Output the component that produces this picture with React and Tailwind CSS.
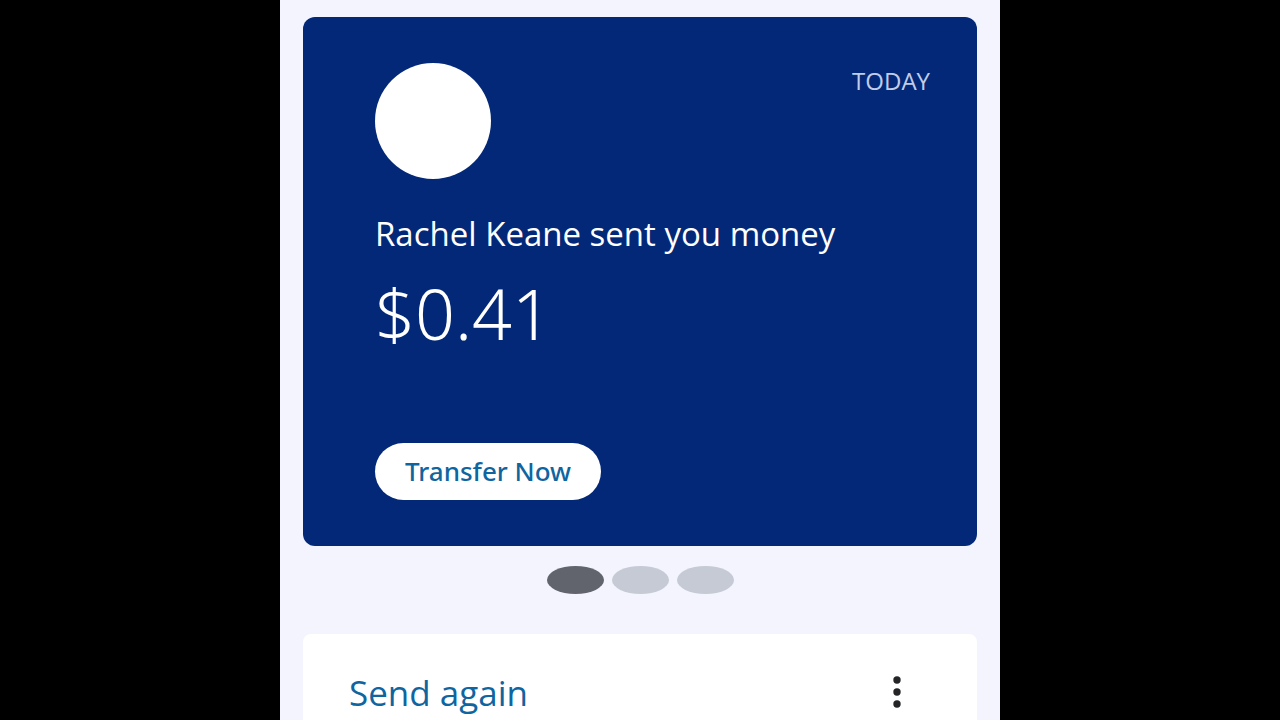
import React, { useState } from 'react'

const transfers = [
  { id: 1, label: 'Transfer received' },
  { id: 2, label: 'Second notice' },
  { id: 3, label: 'Third notice' },
]

function MoneyCard({ name, amount, day }) {
  return (
    <section className="rounded-xl bg-[#032878] pt-[46px] pr-[47px] pb-[46px] pl-[72px] text-white">
      <div className="flex items-start justify-between">
        <div className="h-[116px] w-[116px] rounded-full bg-white" />
        <time className="text-2xl leading-9 text-[#c0cdea]">{day}</time>
      </div>
      <h1 className="mt-8 text-[33px] leading-[46px]">{name} sent you money</h1>
      <p className="mt-4 font-['Noto_Sans'] text-[70px] leading-[80px] font-light">{amount}</p>
      <button className="mt-[90px] block h-[57px] rounded-full bg-white px-[30px] font-['Noto_Sans'] text-[26px] font-medium text-[#0f659f]">
        Transfer Now
      </button>
    </section>
  )
}

export default function App() {
  const [active, setActive] = useState(1)

  return (
    <div className="min-h-screen bg-black font-['Open_Sans',sans-serif]">
      <main className="mx-auto flex min-h-screen max-w-[720px] flex-col bg-[#f3f4fd] px-[23px] pt-[17px]">
        <MoneyCard name="Rachel Keane" amount="$0.41" day="TODAY" />

        <div className="flex justify-center gap-2 pt-5 pb-10">
          {transfers.map((t) => (
            <button
              key={t.id}
              aria-label={t.label}
              onClick={() => setActive(t.id)}
              className={`h-[28px] w-[57px] rounded-[50%] ${
                active === t.id ? 'bg-[#61646d]' : 'bg-[#c6cad4]'
              }`}
            />
          ))}
        </div>

        <section className="flex-1 rounded-t-lg bg-white pt-9 pr-[72px] pl-[46px]">
          <div className="flex items-start justify-between">
            <h2 className="text-[35px] leading-[46px] font-medium text-[#0f659f]">Send again</h2>
            <button aria-label="More options" className="flex h-11 w-4 items-center justify-center text-[#242527]">
              <svg viewBox="0 0 8 32" className="h-8 w-2" fill="currentColor">
                <circle cx="4" cy="4" r="3.7" />
                <circle cx="4" cy="16" r="3.7" />
                <circle cx="4" cy="28" r="3.7" />
              </svg>
            </button>
          </div>
        </section>
      </main>
    </div>
  )
}
